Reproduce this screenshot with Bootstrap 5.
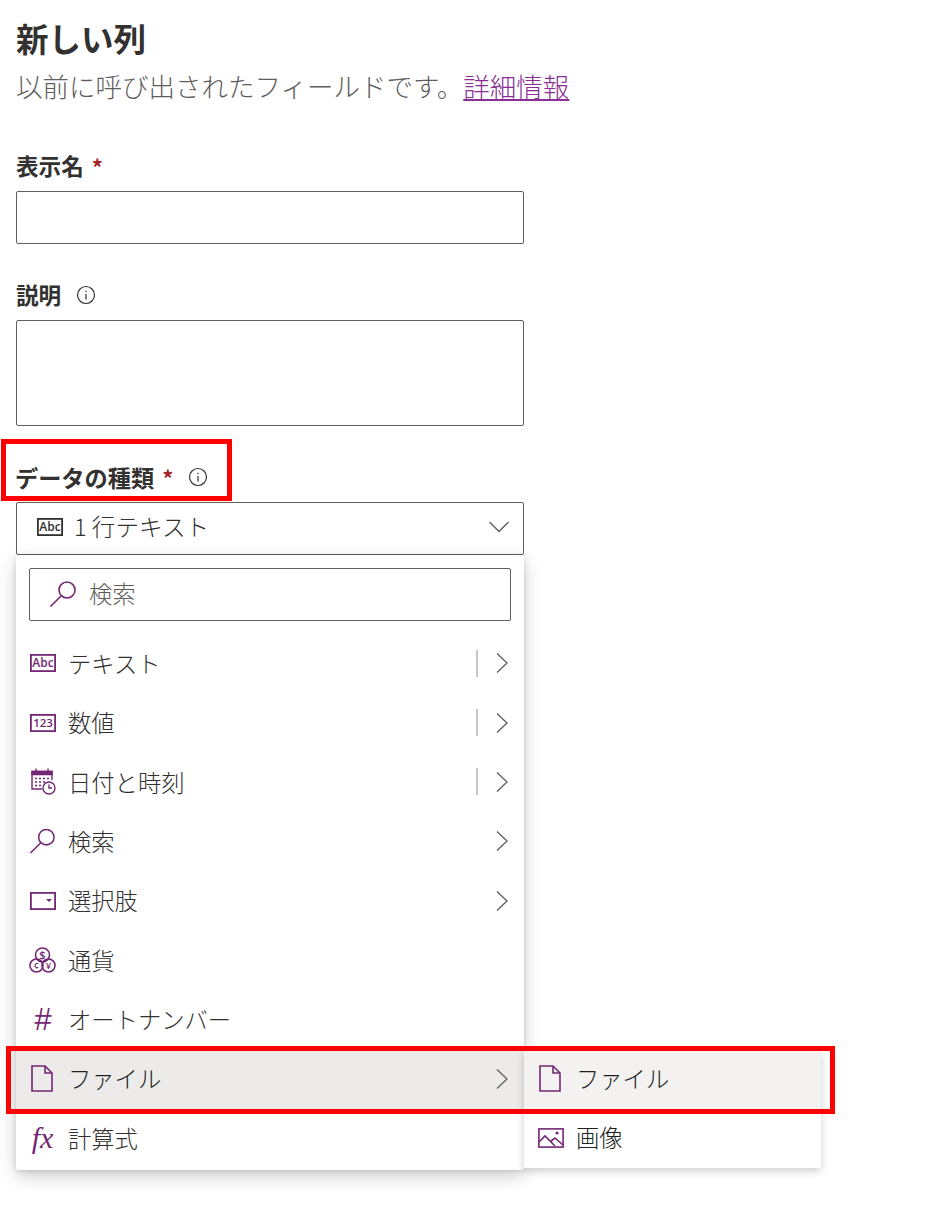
<!DOCTYPE html>
<html lang="ja">
<head>
<meta charset="UTF-8">
<title>新しい列</title>
<link rel="stylesheet" href="https://cdn.jsdelivr.net/npm/bootstrap@5.3.0/dist/css/bootstrap.min.css">
<style>
  body {
    background: #fff;
    color: #323130;
    font-family: "Noto Sans CJK JP", "Liberation Sans", sans-serif;
    font-weight: 300;
  }
  .pane {
    position: relative;
    width: 951px;
    height: 1228px;
    padding: 14px 0 0 16px;
    overflow: hidden;
  }
  .pane-title {
    font-size: 32.5px;
    font-weight: 700;
    line-height: 48px;
    margin: 0;
    height: 48px;
  }
  .pane-sub {
    font-size: 26.5px;
    line-height: 40px;
    margin: 4px 0 0;
    color: #605e5c;
    white-space: nowrap;
  }
  .pane-sub a { color: #8a2f95; }
  .fld-label {
    display: flex;
    align-items: center;
    font-size: 22.6px;
    font-weight: 700;
    line-height: 32px;
    height: 32px;
    margin: 0 0 8px;
    padding-bottom: 2px;
  }
  .fld-label-wide { font-size: 23.2px; margin-left: -1px; }
  .fld-star { color: #a4262c; margin-left: 8px; font-size: 22px; }
  .fld-info { margin-left: 15px; }
  .fld-box.form-control, .fld-select {
    width: 508px;
    border: 1px solid #605e5c;
    border-radius: 2px;
    box-shadow: none;
  }
  .fld-box.form-control { height: 53px; padding: 0 12px; }
  textarea.fld-box.form-control { height: 106px; resize: none; }
  .fld-select {
    height: 53px;
    font-size: 23.6px;
    padding: 0 14px 3px 20px;
  }
  .fld-select-icon { margin-right: 11px; }
  .gap-a { margin-top: 45px; }
  .gap-b { margin-top: 36px; }
  .gap-c { margin-top: 36px; }
  .type-menu {
    width: 508px;
    height: 615px;
    background: #fff;
    border-radius: 2px;
    box-shadow: 0 6px 18px rgba(0,0,0,.2), 0 1px 5px rgba(0,0,0,.12);
    padding-top: 13px;
    position: relative;
    z-index: 1;
  }
  .menu-search {
    width: 482px;
    height: 53px;
    margin: 0 13px 13.5px;
    border: 1px solid #605e5c;
    border-radius: 2px;
    font-size: 23.3px;
    color: #605e5c;
    padding: 0 0 2px 19px;
    gap: 12px;
  }
  .type-row.list-group-item {
    height: 59.4px;
    border: 0;
    border-radius: 0;
    padding: 0 16px 2px 13px;
    font-size: 23.3px;
    color: #323130;
    background: transparent;
    position: relative;
    font-weight: 300;
  }
  .type-row.is-hover { background: #edebe9; color: #201f1e; }
  .row-icon { width: 27px; margin-right: 12px; flex: none; display: flex; justify-content: center; }
  .row-icon-file { padding-right: 2px; }
  .row-end { margin-left: auto; display: flex; align-items: center; }
  .row-div { width: 2px; height: 27px; background: #c8c6c4; margin-right: 18px; }
  .glyph-fx, .glyph-hash {
    font-family: "Liberation Serif", serif;
    font-style: italic;
    color: #742774;
    font-size: 30px;
    line-height: 1;
  }
  .glyph-hash { font-family: "Liberation Sans", sans-serif; font-size: 31px; font-weight: 400; }
  .sub-menu {
    position: absolute;
    left: 508px;
    top: 0;
    width: 297px;
    height: 118px;
    background: #fff;
    border-radius: 0 0 2px 2px;
    box-shadow: 0 3px 9px rgba(0,0,0,.2);
    z-index: 2;
  }
  .sub-row { height: 59px; padding: 0 0 2px 13px; font-size: 23.3px; }
  .sub-row.is-first { background: #f3f2f1; }
  .mark-box {
    position: absolute;
    border: 5px solid #ff0000;
    z-index: 5;
    pointer-events: none;
  }
  .mark-a { left: 1px; top: 439px; width: 231px; height: 62px; }
  .mark-b { left: 6px; top: 1046px; width: 829px; height: 68px; }
  .svg-text { font-family: "Open Sans", "Liberation Sans", sans-serif; font-weight: 600; fill: #742774; }
</style>
</head>
<body>

<div class="pane">
  <h1 class="pane-title">新しい列</h1>
  <p class="pane-sub">以前に呼び出されたフィールドです。<a href="#">詳細情報</a></p>

  <div class="gap-a">
    <label class="fld-label">表示名<span class="fld-star">*</span></label>
    <input type="text" class="form-control fld-box">
  </div>

  <div class="gap-b">
    <label class="fld-label mb-2">説明
      <svg class="fld-info" width="20" height="20" viewBox="0 0 20 20" fill="none" stroke="#323130"><circle cx="10" cy="10" r="8.5" stroke-width="1.2"/><path d="M10 9v5.5M10 5.8v1.4" stroke-width="1.2"/></svg>
    </label>
    <textarea class="form-control fld-box"></textarea>
  </div>

  <div class="gap-c">
    <label class="fld-label fld-label-wide">データの種類<span class="fld-star">*</span>
      <svg class="fld-info" width="20" height="20" viewBox="0 0 20 20" fill="none" stroke="#323130"><circle cx="10" cy="10" r="8.5" stroke-width="1.2"/><path d="M10 9v5.5M10 5.8v1.4" stroke-width="1.2"/></svg>
    </label>
    <div class="fld-select d-flex align-items-center">
      <svg width="26" height="18" viewBox="0 0 26 18" class="fld-select-icon"><rect x=".9" y=".9" width="24.2" height="16.2" fill="none" stroke="#323130" stroke-width="1.8"/><text x="13" y="13" text-anchor="middle" font-size="12" class="svg-text" style="fill:#323130">Abc</text></svg>
      <span>1 行テキスト</span>
      <svg class="ms-auto" width="20" height="12" viewBox="0 0 20 12" fill="none" stroke="#605e5c" stroke-width="1.4"><path d="M.5 1l9.5 9.5L19.5 1"/></svg>
    </div>
  </div>

  <div class="type-menu">
    <div class="menu-search d-flex align-items-center">
      <svg width="28" height="28" viewBox="0 0 28 28" fill="none" stroke="#742774" stroke-width="1.6"><circle cx="18" cy="10" r="8"/><path d="M12 16L1.5 26.5"/></svg>
      <span>検索</span>
    </div>

    <div class="list-group">
      <div class="list-group-item type-row d-flex align-items-center">
        <span class="row-icon"><svg width="26" height="18" viewBox="0 0 26 18"><rect x=".9" y=".9" width="24.2" height="16.2" fill="none" stroke="#742774" stroke-width="1.8"/><text x="13" y="13" text-anchor="middle" font-size="12" class="svg-text">Abc</text></svg></span>
        <span>テキスト</span>
        <span class="row-end"><span class="row-div"></span><svg width="12" height="20" viewBox="0 0 12 20" fill="none" stroke="#605e5c" stroke-width="1.3"><path d="M1 .5L11 10 1 19.5"/></svg></span>
      </div>
      <div class="list-group-item type-row d-flex align-items-center">
        <span class="row-icon"><svg width="26" height="18" viewBox="0 0 26 18"><rect x=".9" y=".9" width="24.2" height="16.2" fill="none" stroke="#742774" stroke-width="1.8"/><text x="13" y="13" text-anchor="middle" font-size="11.5" class="svg-text">123</text></svg></span>
        <span>数値</span>
        <span class="row-end"><span class="row-div"></span><svg width="12" height="20" viewBox="0 0 12 20" fill="none" stroke="#605e5c" stroke-width="1.3"><path d="M1 .5L11 10 1 19.5"/></svg></span>
      </div>
      <div class="list-group-item type-row d-flex align-items-center">
        <span class="row-icon"><svg width="26" height="27" viewBox="0 0 26 27" fill="none" stroke="#742774" stroke-width="1.4"><path d="M12 21H2V3.5h20V12M6 .5v4M18 .5v4"/><path d="M2 3.5h20v3H2z" fill="#742774"/><path d="M5 10.5h2M9 10.5h2M13 10.5h2M17 10.5h2M5 14h2M9 14h2M13 14h2M5 17.5h2M9 17.5h2" stroke-width="1.5"/><circle cx="19" cy="20" r="6" fill="#fff"/><path d="M19 16.5V20h3"/></svg></span>
        <span>日付と時刻</span>
        <span class="row-end"><span class="row-div"></span><svg width="12" height="20" viewBox="0 0 12 20" fill="none" stroke="#605e5c" stroke-width="1.3"><path d="M1 .5L11 10 1 19.5"/></svg></span>
      </div>
      <div class="list-group-item type-row d-flex align-items-center">
        <span class="row-icon"><svg width="28" height="28" viewBox="0 0 28 28" fill="none" stroke="#742774" stroke-width="1.6"><circle cx="18" cy="10" r="8"/><path d="M12 16L1.5 26.5"/></svg></span>
        <span>検索</span>
        <span class="row-end"><svg width="12" height="20" viewBox="0 0 12 20" fill="none" stroke="#605e5c" stroke-width="1.3"><path d="M1 .5L11 10 1 19.5"/></svg></span>
      </div>
      <div class="list-group-item type-row d-flex align-items-center">
        <span class="row-icon"><svg width="26" height="18" viewBox="0 0 26 18"><rect x=".9" y=".9" width="24.2" height="16.2" fill="none" stroke="#742774" stroke-width="1.8"/><path d="M16 7h6l-3 3z" fill="#742774"/></svg></span>
        <span>選択肢</span>
        <span class="row-end"><svg width="12" height="20" viewBox="0 0 12 20" fill="none" stroke="#605e5c" stroke-width="1.3"><path d="M1 .5L11 10 1 19.5"/></svg></span>
      </div>
      <div class="list-group-item type-row d-flex align-items-center">
        <span class="row-icon"><svg width="27" height="27" viewBox="0 0 27 27" fill="none" stroke="#742774" stroke-width="1.6"><circle cx="13.5" cy="8" r="7"/><circle cx="7.5" cy="18.5" r="6.5"/><circle cx="19.5" cy="18.5" r="6.5"/><text x="13.5" y="12" text-anchor="middle" font-size="11" class="svg-text" stroke="none">$</text><text x="7.5" y="22" text-anchor="middle" font-size="9.5" class="svg-text" stroke="none">¢</text><text x="19.5" y="22" text-anchor="middle" font-size="9.5" class="svg-text" stroke="none">¥</text></svg></span>
        <span>通貨</span>
      </div>
      <div class="list-group-item type-row d-flex align-items-center">
        <span class="row-icon"><span class="glyph-hash">#</span></span>
        <span>オートナンバー</span>
      </div>
      <div class="list-group-item type-row is-hover d-flex align-items-center">
        <span class="row-icon row-icon-file"><svg width="22" height="27" viewBox="0 0 22 27" fill="none" stroke="#742774" stroke-width="1.6"><path d="M1 1h13l7 7v18H1z"/><path d="M14 1v7h7"/></svg></span>
        <span>ファイル</span>
        <span class="row-end"><svg width="12" height="20" viewBox="0 0 12 20" fill="none" stroke="#605e5c" stroke-width="1.3"><path d="M1 .5L11 10 1 19.5"/></svg></span>
        <div class="sub-menu">
          <div class="sub-row is-first d-flex align-items-center">
            <span class="row-icon row-icon-file"><svg width="22" height="27" viewBox="0 0 22 27" fill="none" stroke="#742774" stroke-width="1.6"><path d="M1 1h13l7 7v18H1z"/><path d="M14 1v7h7"/></svg></span>
            <span>ファイル</span>
          </div>
          <div class="sub-row d-flex align-items-center">
            <span class="row-icon"><svg width="26" height="20" viewBox="0 0 26 20" fill="none" stroke="#742774" stroke-width="1.6"><rect x=".9" y=".9" width="24.2" height="18.2"/><path d="M1 14l6-6 10 10M13 13l4-3 8 7"/><circle cx="19" cy="5" r=".8" fill="#742774"/></svg></span>
            <span>画像</span>
          </div>
        </div>
      </div>
      <div class="list-group-item type-row d-flex align-items-center">
        <span class="row-icon"><span class="glyph-fx">fx</span></span>
        <span>計算式</span>
      </div>
    </div>
  </div>

  <div class="mark-box mark-a"></div>
  <div class="mark-box mark-b"></div>
</div>

<script src="https://cdn.jsdelivr.net/npm/bootstrap@5.3.0/dist/js/bootstrap.bundle.min.js"></script>
</body>
</html>
